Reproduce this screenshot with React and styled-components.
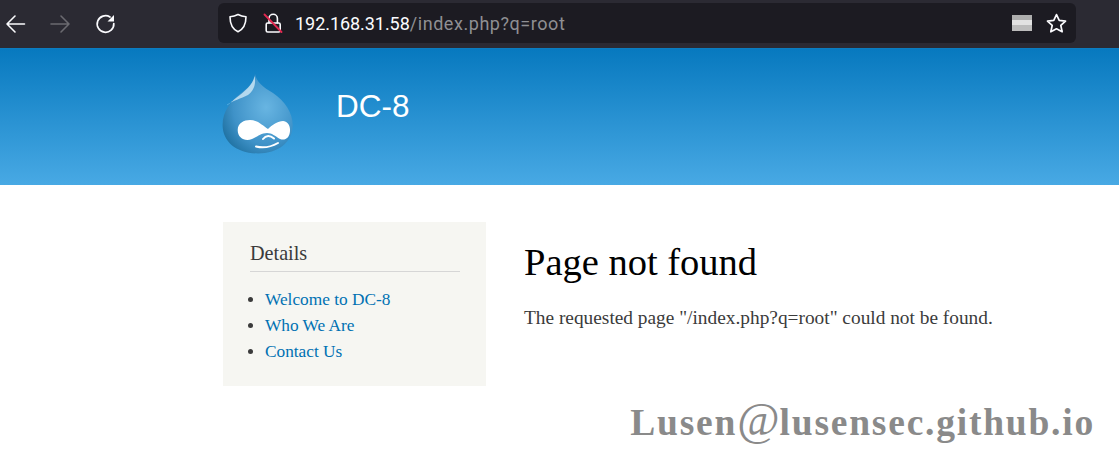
import React from "react";
import styled, { createGlobalStyle } from "styled-components";

const Global = createGlobalStyle`
  html, body { margin: 0; padding: 0; background: #fff; }
  body { width: 1119px; height: 454px; overflow: hidden; position: relative; }
`;
const Toolbar = styled.div`
  box-sizing: border-box; background: #2b2a33; display: flex; align-items: flex-start;
  border-bottom: 1px solid #0b7cc0; height: 49px;
`;
const NavButtons = styled.div`
  width: 218px; height: 48px; display: flex; align-items: center; flex: none; padding: 0 0 0 5px; box-sizing: border-box; gap: 24px;
`;
const NavIcon = styled.svg`
  width: 21px; height: 21px; flex: none; color: ${p => (p.$dim ? "#6b6a70" : "#fbfbfe")};
  margin-top: -1px;
`;
const UrlBar = styled.div`
  width: 858px; height: 40px; margin-top: 3px; background: #1c1b22; border-radius: 6px; display: flex; align-items: center;
  padding: 0 9px 0 10px; box-sizing: border-box;
  font: 18px "Roboto", "Liberation Sans", sans-serif;
`;
const UrlIcon = styled.svg`
  width: ${p => p.$size || 20}px; height: ${p => p.$size || 20}px; flex: none; color: #fbfbfe; margin-right: ${p => p.$mr || 0}px;
`;
const Host = styled.span` color: #fbfbfe; letter-spacing: -0.05px; `;
const Path = styled.span` color: #8f8f93; flex: 1; letter-spacing: 0.55px; `;
const Reader = styled.div`
  width: 20px; height: 16px; margin-right: 14px; flex: none;
  background: linear-gradient(#adadad 0 30%, #e2e2e2 30% 62%, #bcbcbc 62% 100%);
`;
const Banner = styled.header`
  height: 136px; background: linear-gradient(#0779bf, #48a9e4); display: flex; box-sizing: border-box; padding-left: 220px;
`;
const Logo = styled.svg` width: 76px; height: 84px; margin-top: 24px; flex: none; `;
const SiteName = styled.div`
  font: 31.5px/1 "Liberation Sans", Arial, sans-serif; color: #fff; margin-left: 40px; margin-top: 42px;
`;
const Content = styled.main`
  display: flex; padding: 37px 0 0 223px; font-family: "Liberation Serif", Georgia, serif;
`;
const Sidebar = styled.aside`
  width: 263px; height: 164px; box-sizing: border-box; background: #f6f6f2; padding: 20px 26px 0 27px; flex: none; color: #3b3b3b;
`;
const SideTitle = styled.h2`
  margin: 0; font-size: 20.2px; line-height: 23px; font-weight: 400; padding-bottom: 6px; border-bottom: 1px solid #d6d6d6;
`;
const LinkList = styled.ul`
  margin: 15px 0 0; padding: 0 0 0 15px; font-size: 17.3px; line-height: 26px;
`;
const LinkItem = styled.li` color: #3b3b3b; `;
const Anchor = styled.a` color: #0071b3; text-decoration: none; `;
const Article = styled.article` margin-left: 38px; padding-top: 18px; `;
const Title = styled.h1`
  margin: 0; font-size: 38.5px; line-height: 44px; font-weight: 400; color: #000;
`;
const Message = styled.p`
  margin: 22px 0 0; font-size: 19.35px; line-height: 24px; color: #3b3b3b;
`;
const Watermark = styled.div`
  position: absolute; right: 24px; top: 400px; font: 700 37.5px/46px "Liberation Serif", serif; color: #8a8a8a; letter-spacing: 1.78px; white-space: nowrap;
`;
const At = styled.span` font-size: 46px; font-weight: 400; letter-spacing: 0; line-height: 0; `;

const Drop = () => (
  <Logo viewBox="0 0 76 84">
    <defs>
      <radialGradient id="d" cx="0.62" cy="0.42" r="0.72">
        <stop offset="0" stopColor="#68b5e2" />
        <stop offset="0.65" stopColor="#3f92c8" />
        <stop offset="1" stopColor="#1d6f9f" />
      </radialGradient>
    </defs>
    <path d="M35 1C36.5 9 43 14 53 20C65 28 72.7 40 72.7 52C72.7 69 58 80.5 38 80.5C17 80.5 2.6 69 2.6 52C2.6 38 11 28 20 21C28 15 34.5 9 35 1Z" fill="url(#d)" />
    <path d="M34.5 3C33 12 25 18 16 25C11 29 7 33 7 32C13 27 21 26 28 22C35 17 36 9 34.5 3Z" fill="#cfe8f6" opacity="0.8" />
    <path d="M17.7 57C17.7 50 24 47 30 47C38 47 43 53 48 56C52 52 58 48 63 48C67 48 70.5 52 70 58C69.5 65 65 68 60 66C55 63 52 60 47 60C41 60 37 64 32 66C25 69 17.7 65 17.7 57Z" fill="#fff" />
    <path d="M36 73.5C42 75 50 74.5 58 70" fill="none" stroke="#fff" strokeWidth="2" strokeLinecap="round" />
    <path d="M43 66C46 62 50 62 54 65.5" fill="none" stroke="#fff" strokeWidth="2" strokeLinecap="round" />
  </Logo>
);

export default function App() {
  return (
    <>
      <Global />
      <Toolbar>
        <NavButtons>
          <NavIcon viewBox="0 0 21 21" fill="none" stroke="currentColor" strokeWidth="1.6" strokeLinecap="round" strokeLinejoin="round"><path d="M19.5 11H2M10 3l-8 8 8 8" /></NavIcon>
          <NavIcon $dim viewBox="0 0 21 21" fill="none" stroke="currentColor" strokeWidth="1.6" strokeLinecap="round" strokeLinejoin="round"><path d="M1 11h18M11 3l8 8-8 8" /></NavIcon>
          <NavIcon viewBox="0 0 21 21" fill="none" stroke="currentColor" strokeWidth="1.7" strokeLinecap="round"><path d="M18.8 10.5A8.3 8.3 0 1 1 15 4" /><path d="M19 2v6.5h-6.5z" fill="currentColor" stroke="none" /></NavIcon>
        </NavButtons>
        <UrlBar>
          <UrlIcon $mr={15} viewBox="0 0 20 20" fill="none" stroke="currentColor" strokeWidth="1.6" strokeLinejoin="round"><path d="M10 1.5c3 1.6 5.4 2 8 2.2 0 7-1.6 12-8 15-6.4-3-8-8-8-15 2.6-.2 5-.6 8-2.2z" /></UrlIcon>
          <UrlIcon $mr={12} viewBox="0 0 20 20" fill="none" strokeLinecap="round"><rect x="3.2" y="10" width="14" height="9" rx="1.5" stroke="#fbfbfe" strokeWidth="1.6" /><path d="M6 10V5.5a4.2 4.2 0 0 1 8.4 0V10" stroke="#fbfbfe" strokeWidth="1.6" /><path d="M1.5 1.5l17 17.5" stroke="#e22850" strokeWidth="1.8" /></UrlIcon>
          <Host>192.168.31.58</Host><Path>/index.php?q=root</Path>
          <Reader />
          <UrlIcon $size={21} viewBox="0 0 20 20" fill="none" stroke="currentColor" strokeWidth="1.6" strokeLinejoin="round"><path d="M10 1.5l2.6 5.6 6 .7-4.5 4.1 1.3 6L10 15l-5.4 2.9 1.3-6L1.4 7.8l6-.7z" /></UrlIcon>
        </UrlBar>
      </Toolbar>
      <Banner>
        <Drop />
        <SiteName>DC-8</SiteName>
      </Banner>
      <Content>
        <Sidebar>
          <SideTitle>Details</SideTitle>
          <LinkList>
            <LinkItem><Anchor>Welcome to DC-8</Anchor></LinkItem>
            <LinkItem><Anchor>Who We Are</Anchor></LinkItem>
            <LinkItem><Anchor>Contact Us</Anchor></LinkItem>
          </LinkList>
        </Sidebar>
        <Article>
          <Title>Page not found</Title>
          <Message>The requested page "/index.php?q=root" could not be found.</Message>
        </Article>
      </Content>
      <Watermark>Lusen<At>@</At>lusensec.github.io</Watermark>
    </>
  );
}
